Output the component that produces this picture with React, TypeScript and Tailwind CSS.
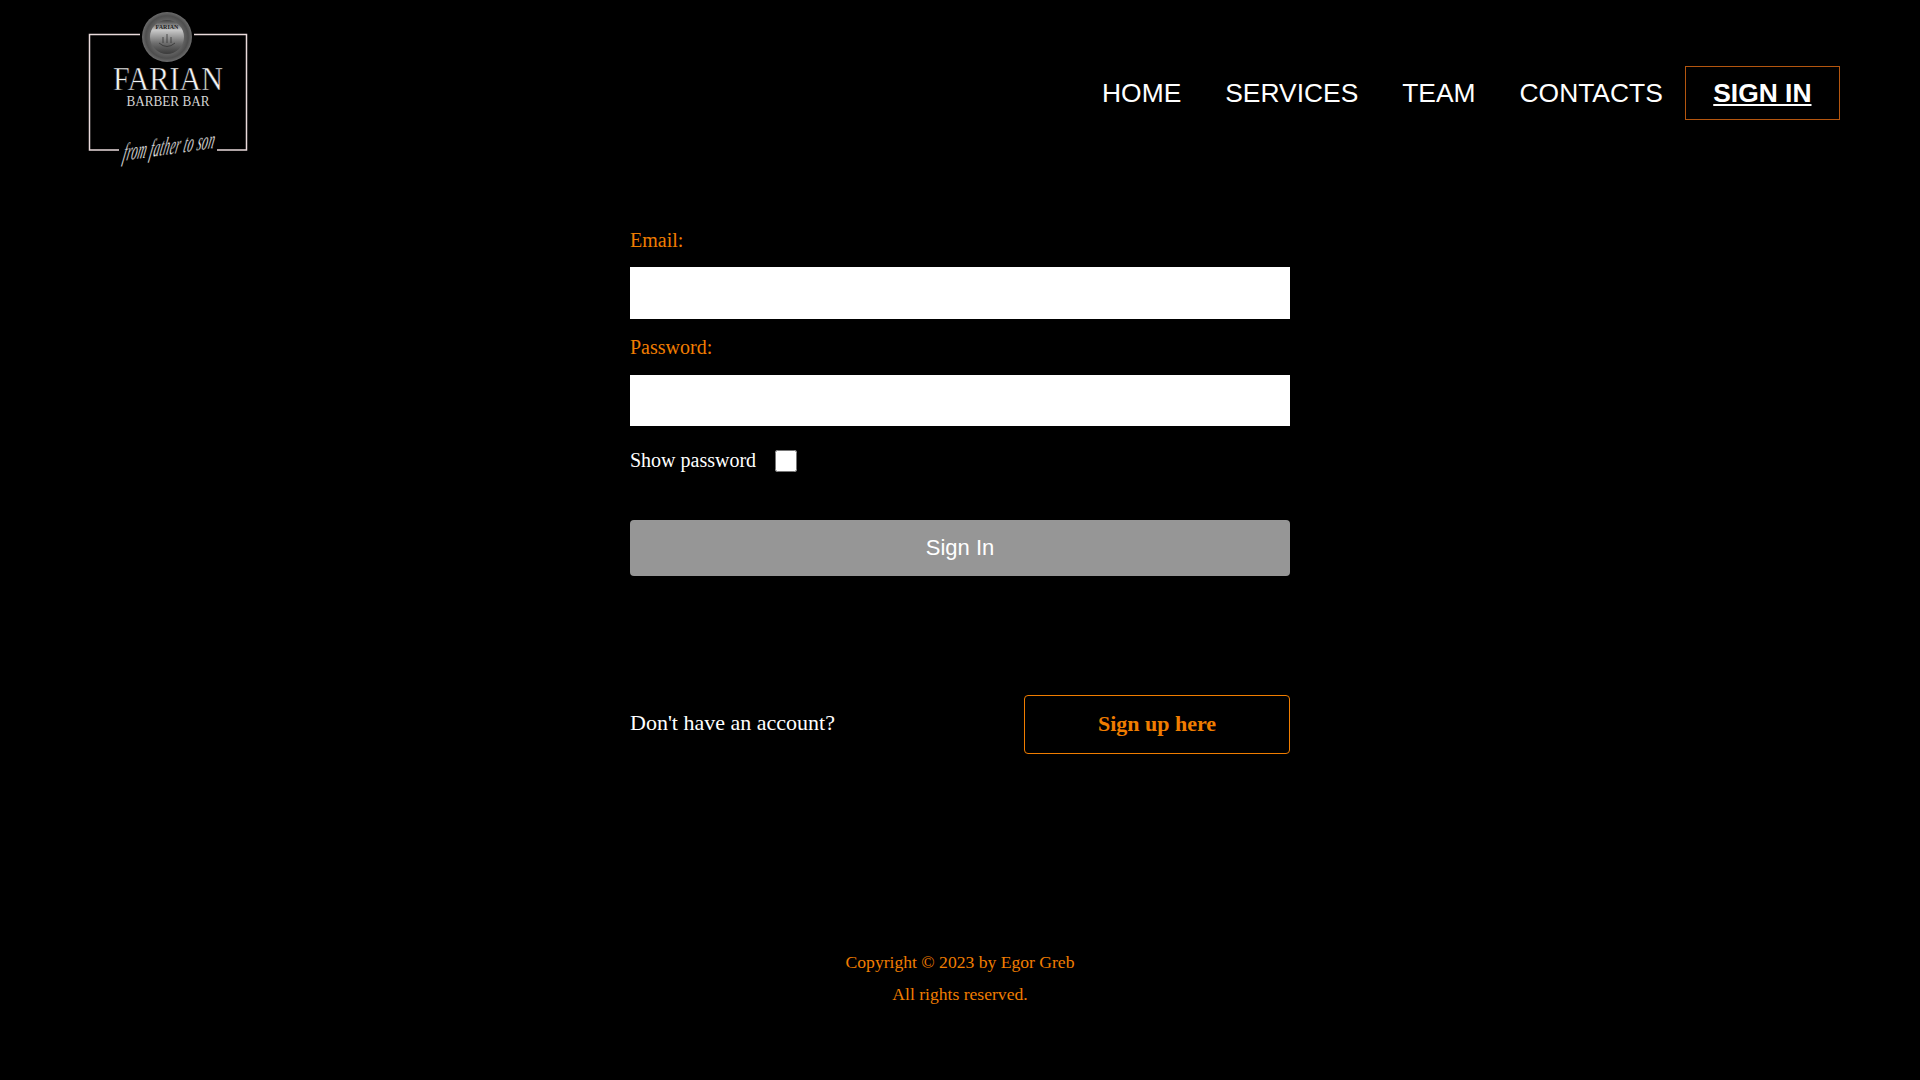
import { useState } from 'react'

const sans = "font-['Liberation_Sans',Arial,sans-serif]"
const serif = "font-['Liberation_Serif','Times_New_Roman',serif]"

function Logo() {
  return (
    <svg width="170" height="175" viewBox="0 5 170 175" aria-label="Farian Barber Bar logo">
      <defs>
        <radialGradient id="medal" cx="50%" cy="50%" r="50%">
          <stop offset="0%" stopColor="#a5a5a5" />
          <stop offset="60%" stopColor="#6a6a6a" />
          <stop offset="85%" stopColor="#4e4e4e" />
          <stop offset="100%" stopColor="#6c6c6c" />
        </radialGradient>
        <linearGradient id="medalInner" x1="0" y1="0" x2="0" y2="1">
          <stop offset="0%" stopColor="#3f3f3f" />
          <stop offset="30%" stopColor="#c8c8c8" />
          <stop offset="68%" stopColor="#6e6e6e" />
          <stop offset="100%" stopColor="#3a3a3a" />
        </linearGradient>
      </defs>
      <path
        d="M56 33.5H5.5V149H35M133 149H162.5V33.5H110"
        fill="none"
        stroke="#e9dadb"
        strokeWidth="1.5"
      />
      <circle cx="83" cy="36" r="25" fill="url(#medal)" />
      <circle cx="83" cy="36" r="17" fill="url(#medalInner)" />
      <text x="83" y="28" textAnchor="middle" fontFamily="Liberation Serif" fontSize="6" fontWeight="700" fill="#1c1c1c">
        FARIAN
      </text>
      <path d="M75 42q8 7 16 0M83 33v9M79 36v6M87 36v6" fill="none" stroke="#333" strokeWidth="0.8" />
      <text
        x="84"
        y="89"
        textAnchor="middle"
        fontFamily="Liberation Serif"
        fontSize="33"
        textLength="110"
        lengthAdjust="spacingAndGlyphs"
        fill="#f4f4f4"
        stroke="#000"
        strokeWidth="0.5"
      >
        FARIAN
      </text>
      <text
        x="84"
        y="105"
        textAnchor="middle"
        fontFamily="Liberation Serif"
        fontSize="15"
        textLength="83"
        lengthAdjust="spacingAndGlyphs"
        fill="#d4d4d4"
      >
        BARBER BAR
      </text>
      <text
        x="0"
        y="0"
        transform="translate(38 160) rotate(-8) skewX(-20) scale(1 2.1)"
        fontFamily="Liberation Serif"
        fontStyle="italic"
        fontSize="12"
        textLength="92"
        lengthAdjust="spacing"
        fill="#f5f5f5"
        stroke="#000"
        strokeWidth="0.15"
      >
        from father to son
      </text>
    </svg>
  )
}

export default function App() {
  const [showPassword, setShowPassword] = useState(false)

  return (
    <div className={`min-h-[1080px] bg-black ${serif}`}>
      <header className={`flex h-[186px] items-center justify-between pl-[84px] pr-[80px] ${sans}`}>
        <Logo />
        <nav className="flex items-center text-[26.4px] text-white">
          <a href="#" className="px-[22px] pt-[2px]">HOME</a>
          <a href="#" className="px-[22px] pt-[2px]">SERVICES</a>
          <a href="#" className="px-[22px] pt-[2px]">TEAM</a>
          <a href="#" className="px-[22px] pt-[2px]">CONTACTS</a>
          <a
            href="#"
            className="flex h-[54px] items-center border border-[#b4560f] px-[27.5px] pt-[2px] font-bold underline"
          >
            SIGN IN
          </a>
        </nav>
      </header>

      <main className="mx-auto w-[660px]">
        <form>
          <label htmlFor="email" className="mt-[38px] block text-[20px] leading-[32px] text-[#f07d00]">
            Email:
          </label>
          <input id="email" type="email" className="mt-[11px] block h-[52px] w-full bg-white" />
          <label htmlFor="password" className="mt-[12px] block text-[20px] leading-[32px] text-[#f07d00]">
            Password:
          </label>
          <input
            id="password"
            type={showPassword ? 'text' : 'password'}
            className="mt-[12px] block h-[51px] w-full bg-white"
          />
          <div className="mt-[23px] flex h-[24px] items-center text-[20px] text-white">
            <label htmlFor="show" className="pb-[2px]">Show password</label>
            <input
              id="show"
              type="checkbox"
              checked={showPassword}
              onChange={(e) => setShowPassword(e.target.checked)}
              className="ml-[19px] h-[22px] w-[22px]"
            />
          </div>
          <button
            type="button"
            className={`mt-[47px] block h-[56px] w-full rounded-[4px] bg-[#969696] pb-[2px] text-[22px] text-white ${sans}`}
          >
            Sign In
          </button>
        </form>

        <div className="mt-[119px] flex items-center justify-between">
          <p className="pb-[4px] text-[22px] text-white">Don't have an account?</p>
          <a
            href="#"
            className="flex h-[59px] w-[266px] items-center justify-center rounded-[4px] border border-[#f07d00] pb-[2px] text-[22px] font-bold text-[#f07d00]"
          >
            Sign up here
          </a>
        </div>
      </main>

      <footer className="mt-[192px] text-center text-[17.6px] leading-[32px] text-[#f07d00]">
        <p>Copyright © 2023 by Egor Greb</p>
        <p>All rights reserved.</p>
      </footer>
    </div>
  )
}
